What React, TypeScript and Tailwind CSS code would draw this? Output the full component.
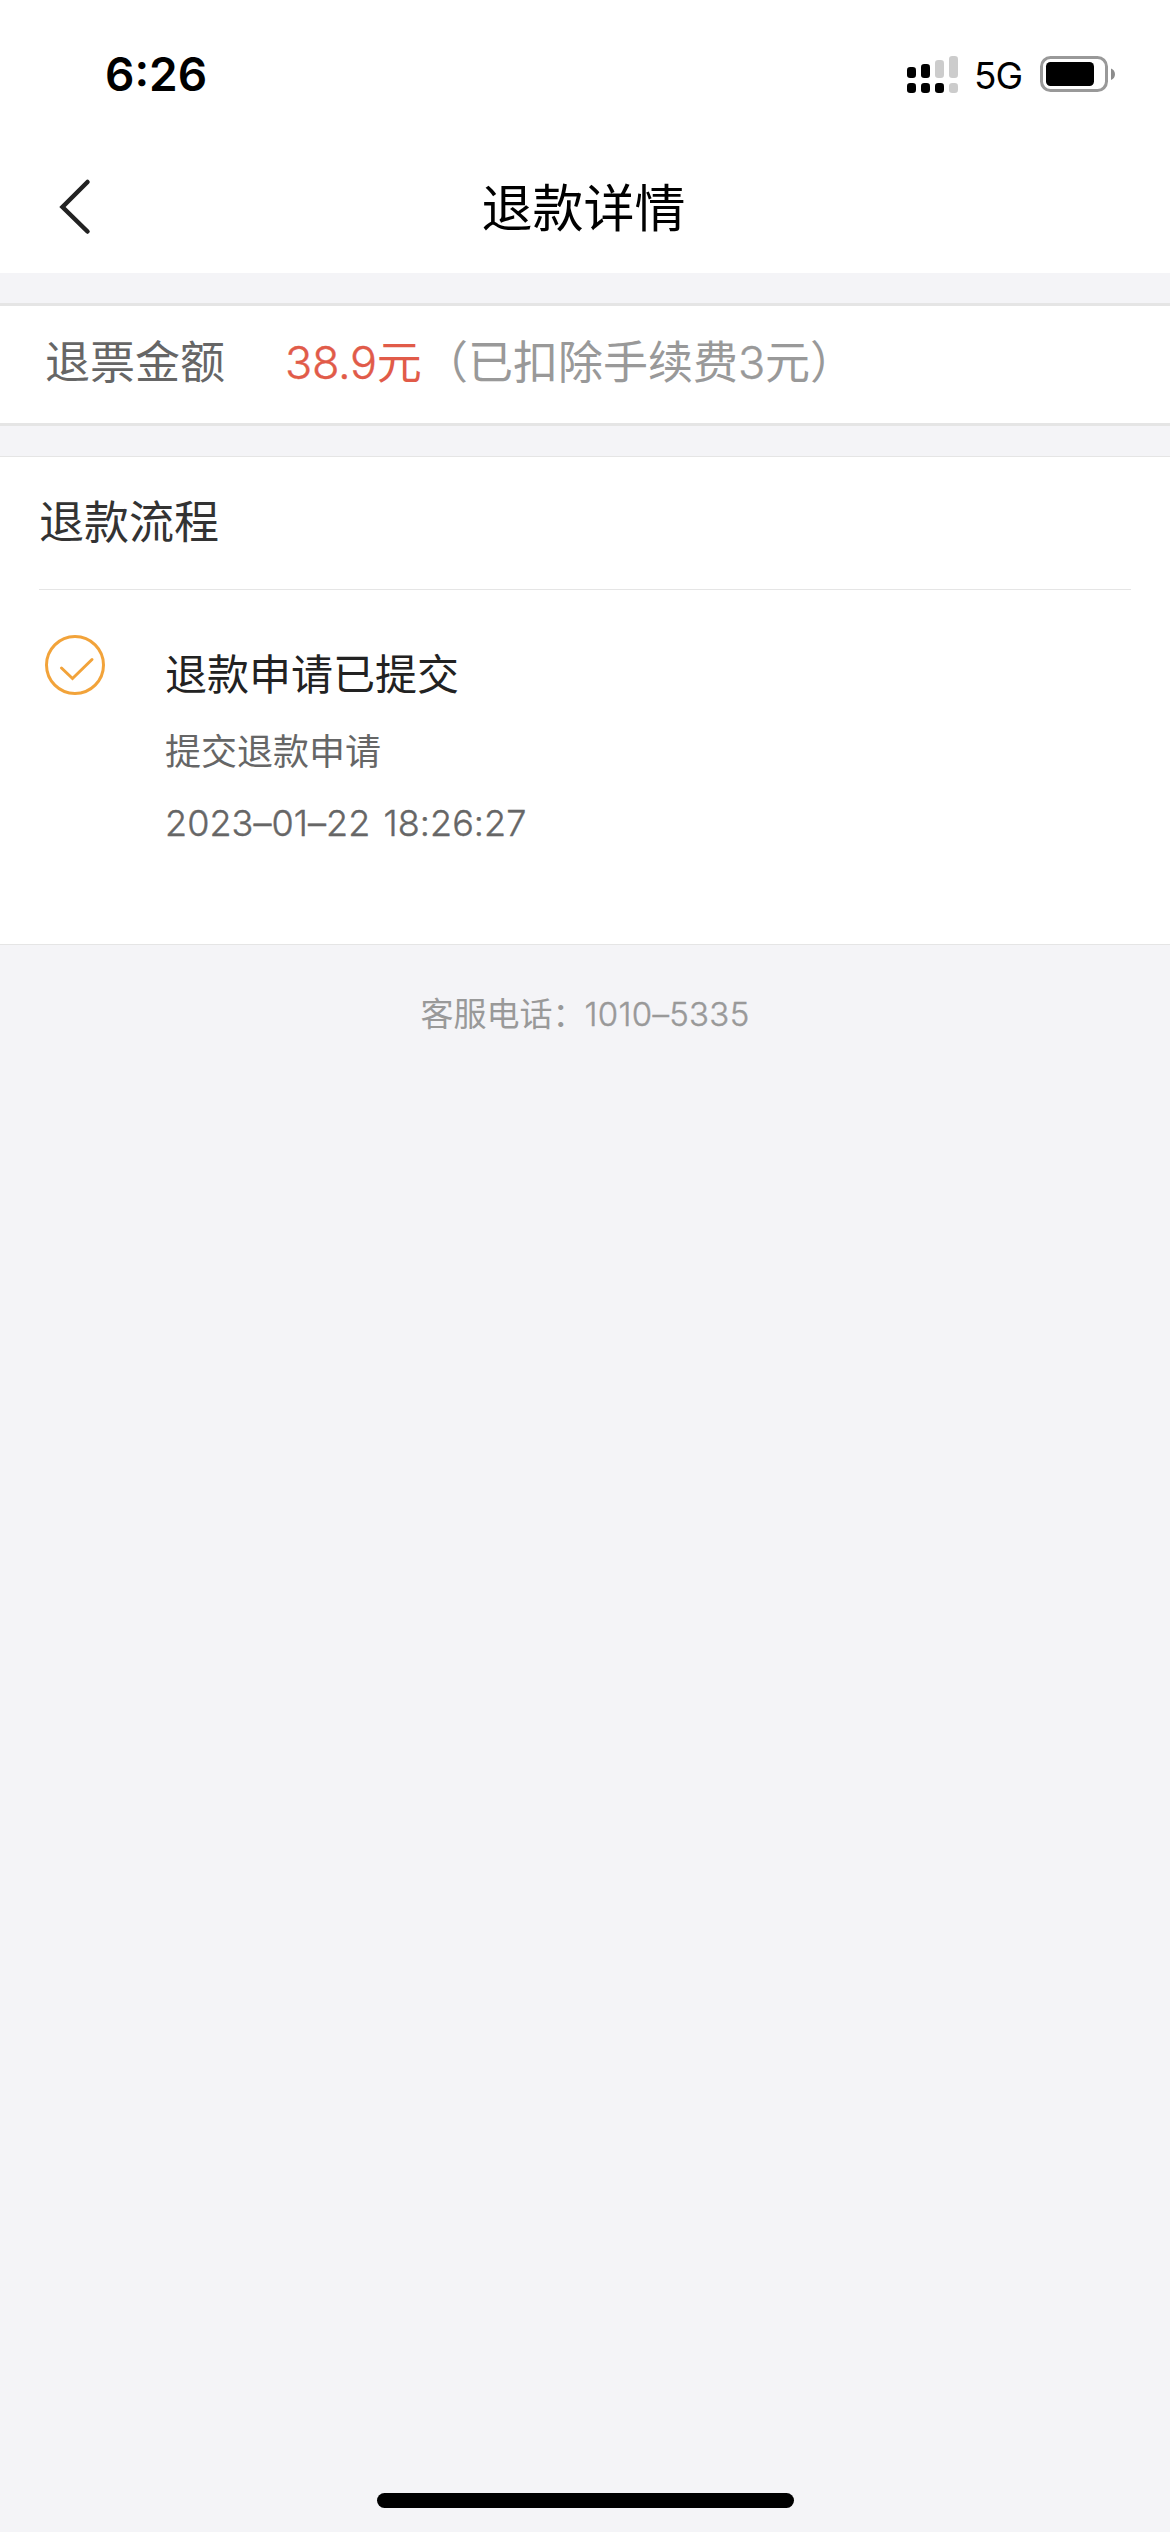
import React from "react";

function StatusBar() {
  return (
    <div className="flex h-[143px] items-start justify-between pl-[105px] pr-[53px] text-black">
      <div className="mt-[50px] text-[46px] font-semibold leading-[48px]">6:26</div>
      <div className="mt-[54px] flex h-[42px] items-center">
        <svg className="h-[42px] w-[52px]" viewBox="0 0 52 42">
          <g fill="#000">
            <rect x="0" y="13" width="9" height="11" rx="3.2" />
            <rect x="14" y="10" width="9" height="14" rx="3.2" />
            <rect x="0" y="29" width="9" height="10" rx="3.2" />
            <rect x="14" y="29" width="9" height="10" rx="3.2" />
            <rect x="28" y="29" width="9" height="10" rx="3.2" />
          </g>
          <g fill="#ccc">
            <rect x="28" y="6" width="9" height="18" rx="3.2" />
            <rect x="42" y="2" width="9" height="22" rx="3.2" />
            <rect x="42" y="29" width="9" height="10" rx="3.2" />
          </g>
        </svg>
        <span className="ml-[15px] w-[50px] whitespace-nowrap pt-px text-[37px] leading-[42px] tracking-[-1px]">5G</span>
        <svg className="ml-[16px] h-[42px] w-[77px]" viewBox="0 0 77 42">
          <rect x="1.5" y="3.5" width="65" height="33" rx="9" fill="none" stroke="#999" strokeWidth="3" />
          <rect x="6" y="8" width="48" height="24" rx="4.5" fill="#000" />
          <path d="M71 14.5c5.300 2 5.300 9.500 0 11.500z" fill="#8c8c8c" />
        </svg>
      </div>
    </div>
  );
}

function NavBar() {
  return (
    <div className="relative flex h-[130px] items-center justify-center pr-[3px] pt-[2px]">
      <button aria-label="返回" className="absolute left-[55px] top-[32px]">
        <svg className="h-[64px] w-[40px]" viewBox="0 0 40 64" fill="none" stroke="#222" strokeWidth="4.500" strokeLinecap="round" strokeLinejoin="miter">
          <path d="M32.500 7L7.500 32L32.500 56.500" />
        </svg>
      </button>
      <h1 className="text-[51px] leading-[60px] text-black">退款详情</h1>
    </div>
  );
}

function AmountRow() {
  return (
    <div className="mt-[30px] flex h-[123px] items-center whitespace-nowrap border-y-3 border-[#e5e5e5] bg-white pb-[3px] pl-[45px] text-[45px] leading-[60px]">
      <span className="text-[#666]">退票金额</span>
      <span className="ml-[60px] w-[138px] text-[#e15b49]">
        <span className="font-light tracking-[-0.4px] [-webkit-text-stroke:0.4px_currentColor]">38.9</span>元
      </span>
      <span className="text-[#999]">
        （已扣除手续费<span className="font-light tracking-[-0.4px] [-webkit-text-stroke:0.4px_currentColor]">3</span>元）
      </span>
    </div>
  );
}

function Process() {
  return (
    <section className="mt-[30px] h-[489px] border-y border-[#e5e5e5] bg-white px-[39px]">
      <h2 className="flex h-[133px] items-center border-b border-[#e5e5e5] text-[45px] leading-[60px] text-[#333]">退款流程</h2>
      <div className="flex">
        <svg className="ml-[6px] mt-[45px] h-[60px] w-[60px]" viewBox="0 0 60 60" fill="none" stroke="#f2a33a" strokeWidth="3">
          <circle cx="30" cy="30" r="28.500" />
          <path d="M16.500 33L27.500 43.500L47 24.500" strokeLinecap="round" />
        </svg>
        <div className="ml-[60px] mt-[55px]">
          <div className="text-[42px] leading-[60px] text-[#222]">退款申请已提交</div>
          <div className="mt-[23px] text-[36px] leading-[48px] text-[#666]">提交退款申请</div>
          <div className="mt-[23px] text-[36px] font-light leading-[48px] tracking-[0.05px] text-[#666] [-webkit-text-stroke:0.4px_currentColor] [word-spacing:3px]">2023–01–22 18:26:27</div>
        </div>
      </div>
    </section>
  );
}

export default function App() {
  return (
    <div className="flex h-[2532px] w-[1170px] flex-col overflow-hidden bg-[#f4f4f7] font-['Inter','Noto_Sans_CJK_SC',sans-serif]">
      <header className="bg-white">
        <StatusBar />
        <NavBar />
      </header>
      <AmountRow />
      <Process />
      <p className="mt-[45px] text-center text-[33px] leading-[48px] text-[#999]">
        客服电话：<span className="ml-[-1px] font-light tracking-[0.3px] [-webkit-text-stroke:0.4px_currentColor]">1010–5335</span>
      </p>
      <div className="mx-auto mb-[24px] mt-auto h-[15px] w-[417px] rounded-full bg-black" />
    </div>
  );
}
